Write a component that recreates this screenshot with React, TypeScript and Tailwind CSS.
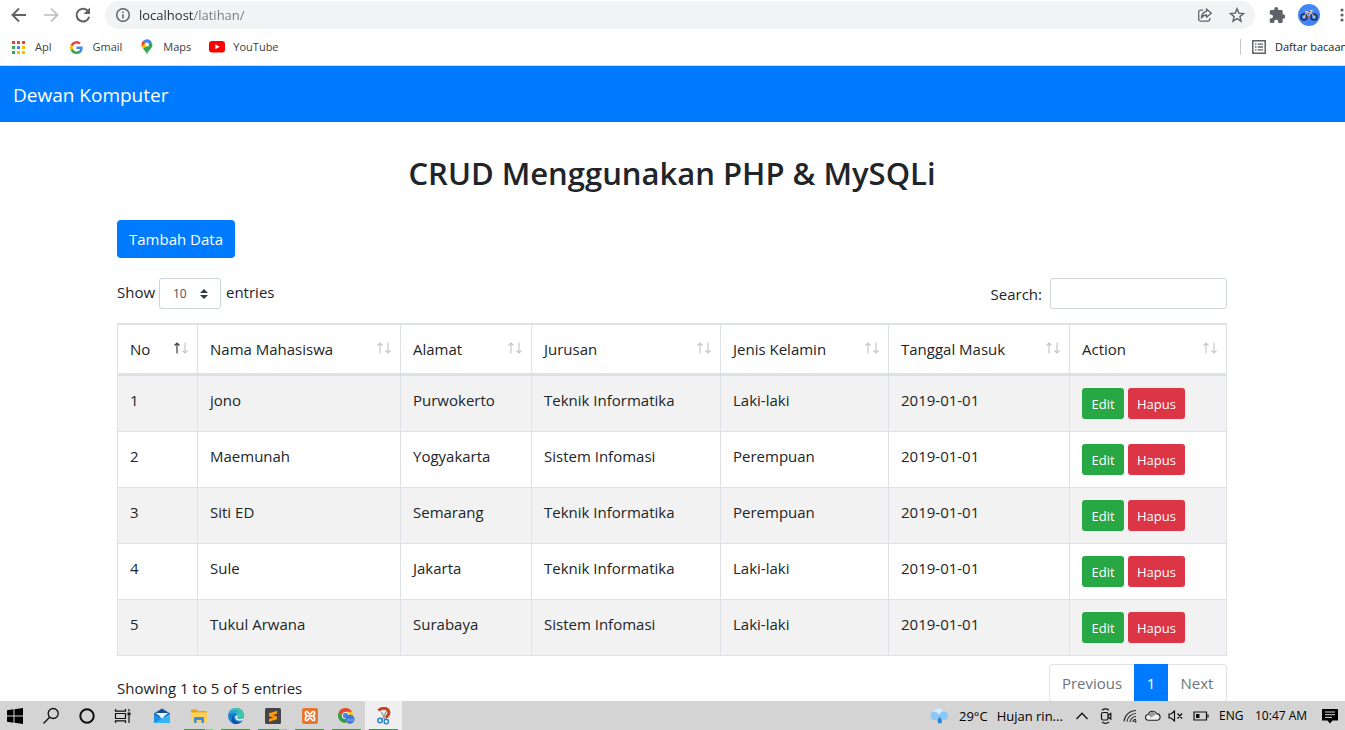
import type { ReactNode } from "react";

type Student = {
  no: number;
  nama: string;
  alamat: string;
  jurusan: string;
  kelamin: string;
  masuk: string;
};

const students: Student[] = [
  { no: 1, nama: "jono", alamat: "Purwokerto", jurusan: "Teknik Informatika", kelamin: "Laki-laki", masuk: "2019-01-01" },
  { no: 2, nama: "Maemunah", alamat: "Yogyakarta", jurusan: "Sistem Infomasi", kelamin: "Perempuan", masuk: "2019-01-01" },
  { no: 3, nama: "Siti ED", alamat: "Semarang", jurusan: "Teknik Informatika", kelamin: "Perempuan", masuk: "2019-01-01" },
  { no: 4, nama: "Sule", alamat: "Jakarta", jurusan: "Teknik Informatika", kelamin: "Laki-laki", masuk: "2019-01-01" },
  { no: 5, nama: "Tukul Arwana", alamat: "Surabaya", jurusan: "Sistem Infomasi", kelamin: "Laki-laki", masuk: "2019-01-01" },
];

const columns = [
  { label: "No", width: "w-[80px]" },
  { label: "Nama Mahasiswa", width: "w-[203px]" },
  { label: "Alamat", width: "w-[131px]" },
  { label: "Jurusan", width: "w-[189px]" },
  { label: "Jenis Kelamin", width: "w-[168px]" },
  { label: "Tanggal Masuk", width: "w-[181px]" },
  { label: "Action", width: "w-[157px]" },
];

function SortArrows({ active }: { active: boolean }) {
  return (
    <svg width="16" height="14" viewBox="0 0 16 14" fill="none" strokeWidth="1.2" aria-hidden="true">
      <path d="M4 11.5V1M1.500 3.500 4 1 6.500 3.500" stroke={active ? "#3a3f44" : "#c6c7c9"} />
      <path d="M12 .5V11M9.500 8.500 12 11 14.500 8.500" stroke="#c6c7c9" />
    </svg>
  );
}

function IconButton({ label, children, className = "" }: { label: string; children: ReactNode; className?: string }) {
  return (
    <button type="button" aria-label={label} className={`flex shrink-0 items-center justify-center ${className}`}>
      {children}
    </button>
  );
}

function BrowserToolbar() {
  return (
    <div className="flex h-[30px] items-center overflow-hidden pl-[10px]">
      <IconButton label="Back" className="w-[18px]">
        <svg width="18" height="18" viewBox="0 0 18 18" fill="none" stroke="#5f6368" strokeWidth="1.9">
          <path d="M16 9H3M9 2.500 2.500 9 9 15.500" />
        </svg>
      </IconButton>
      <IconButton label="Forward" className="ml-[14px] w-[18px]">
        <svg width="18" height="18" viewBox="0 0 18 18" fill="none" stroke="#babcbe" strokeWidth="1.700">
          <path d="M2 9H15M9 2.500 15.500 9 9 15.500" />
        </svg>
      </IconButton>
      <IconButton label="Reload" className="ml-[14px] w-[18px]">
        <svg width="18" height="18" viewBox="0 0 18 18">
          <path d="M14.200 5.300A6.400 6.400 0 1 0 15.200 10.800" fill="none" stroke="#5f6368" strokeWidth="2" />
          <path d="M16 1.500V8H9.500Z" fill="#5f6368" />
        </svg>
      </IconButton>
      <div className="ml-[13px] flex h-[28px] min-w-0 flex-1 items-center rounded-full bg-[#f1f3f4] pr-[10px] pl-[10px]">
        <IconButton label="Site information" className="w-4">
          <svg width="16" height="16" viewBox="0 0 16 16" fill="none" stroke="#5f6368" strokeWidth="1.500">
            <circle cx="8" cy="8" r="6.300" />
            <path d="M8 7.300V11.500M8 4.400V6" />
          </svg>
        </IconButton>
        <input
          type="text"
          aria-label="Address"
          defaultValue="localhost/latihan/"
          className="ml-2 min-w-0 flex-1 bg-[linear-gradient(90deg,#26272b_55px,#777a7e_55px)] bg-clip-text text-[13px] text-transparent outline-none"
        />
        <IconButton label="Share" className="w-4">
          <svg width="16" height="16" viewBox="0 0 16 16" fill="none" stroke="#5f6368" strokeWidth="1.300">
            <path d="M6 3.200H3.500A1.800 1.800 0 0 0 1.700 5V12.300A1.800 1.800 0 0 0 3.500 14.100H11A1.800 1.800 0 0 0 12.800 12.300V11" />
            <path d="M9.500 2 14.300 6.200 9.500 10.300V8C7.200 8 5.600 8.900 4.300 11 4.600 7.700 6.200 5 9.500 4.400Z" strokeLinejoin="round" />
          </svg>
        </IconButton>
        <IconButton label="Bookmark this page" className="ml-4 w-4">
          <svg width="16" height="16" viewBox="0 0 16 16" fill="none" stroke="#5f6368" strokeWidth="1.400">
            <path d="m8 1.700 1.800 4.400 4.700.4-3.600 3.100 1.100 4.600L8 11.700 4 14.200l1.100-4.600L1.500 6.500l4.700-.4Z" />
          </svg>
        </IconButton>
      </div>
      <IconButton label="Extensions" className="ml-[14px] w-4">
        <svg width="16" height="16" viewBox="1 1 21 21" fill="#5f6368">
          <path d="M20.500 11H19V7c0-1.100-.9-2-2-2h-4V3.500a2.500 2.500 0 0 0-5 0V5H4c-1.100 0-2 .9-2 2v3.800h1.500a2.700 2.700 0 0 1 0 5.400H2V20c0 1.100.9 2 2 2h3.800v-1.500a2.700 2.700 0 0 1 5.400 0V22H17c1.100 0 2-.9 2-2v-4h1.500a2.500 2.500 0 0 0 0-5Z" />
        </svg>
      </IconButton>
      <IconButton label="Profile" className="ml-[13px] w-[22px]">
        <svg width="22" height="22" viewBox="0 0 22 22" fill="none">
          <circle cx="11" cy="11" r="11" fill="#4285f4" />
          <circle cx="6" cy="13" r="3" stroke="#26304a" strokeWidth="1.500" />
          <circle cx="16" cy="13" r="3" stroke="#26304a" strokeWidth="1.500" />
          <circle cx="6" cy="13" r="1" fill="#c8d4e8" />
          <circle cx="16" cy="13" r="1" fill="#c8d4e8" />
          <path d="M6 13 8.500 8.500H13L10.500 13 8.500 8.500M13 8.500 16 13" stroke="#e9b7a0" strokeWidth="1" />
          <path d="M7 7.500H9.500M12 6.500H14.500L13 8.500" stroke="#c9dcff" strokeWidth="1" />
          <path d="M9.500 13H12" stroke="#d64b3c" strokeWidth="1.500" />
        </svg>
      </IconButton>
      <IconButton label="Browser menu" className="ml-[17px] w-[8px]">
        <svg width="8" height="16" viewBox="0 0 8 16" fill="#5f6368">
          <circle cx="5" cy="3" r="1.600" />
          <circle cx="5" cy="8" r="1.600" />
          <circle cx="5" cy="13" r="1.600" />
        </svg>
      </IconButton>
    </div>
  );
}

const appDots = ["#ea4335", "#ea4335", "#ea4335", "#34a853", "#4285f4", "#fbbc04", "#34a853", "#fbbc04", "#fbbc04"];

function BookmarksBar() {
  return (
    <nav aria-label="Bookmarks" className="flex h-[36px] items-center overflow-hidden border-b border-[#dadce0] pb-px pl-3 text-[11px] whitespace-nowrap text-[#3c4043]">
      <a href="#apps" className="flex items-center gap-[10px]">
        <svg width="13" height="13" viewBox="0 0 13 13">
          {appDots.map((fill, i) => (
            <rect key={i} x={(i % 3) * 5} y={Math.floor(i / 3) * 5} width="3" height="3" fill={fill} />
          ))}
        </svg>
        Apl
      </a>
      <a href="#gmail" className="ml-[19px] flex items-center gap-[9px]">
        <svg width="13" height="13" viewBox="0 0 24 24">
          <path fill="#4285f4" d="M23.500 12.300c0-.9-.1-1.500-.2-2.200H12v4.500h6.500a5.600 5.600 0 0 1-2.400 3.700v3h3.900c2.200-2.100 3.500-5.200 3.500-9Z" />
          <path fill="#34a853" d="M12 24c3.200 0 6-1.100 8-2.900l-3.900-3a7.200 7.200 0 0 1-10.800-3.800h-4v3.100A12 12 0 0 0 12 24Z" />
          <path fill="#fbbc05" d="M5.300 14.300a7.300 7.300 0 0 1 0-4.600V6.600h-4a12 12 0 0 0 0 10.800Z" />
          <path fill="#ea4335" d="M12 4.800c1.800 0 3.300.6 4.600 1.800l3.400-3.400A12 12 0 0 0 1.300 6.600l4 3.100A7.100 7.100 0 0 1 12 4.800Z" />
        </svg>
        Gmail
      </a>
      <a href="#maps" className="ml-[18px] flex items-center gap-[9px]">
        <svg width="14" height="16" viewBox="0 0 14 16">
          <path fill="#34a853" d="M7 16C7 12 12.500 10 12.500 5.800L11 2.500 3 9.800C4.800 12 6.500 13 7 16Z" />
          <path fill="#fbbc04" d="M2.500 9.200 9 6.500 5 4 1.700 7.500Z" />
          <path fill="#ea4335" d="M3.200 1.800A5.600 5.600 0 0 0 1.800 7.500L5.500 4Z" />
          <path fill="#4285f4" d="M3.200 1.800A5.500 5.500 0 0 1 11.500 2.600L8.500 6 5.500 4Z" />
          <circle cx="7" cy="5.600" r="2" fill="#fff" />
        </svg>
        Maps
      </a>
      <a href="#youtube" className="ml-[18px] flex items-center gap-2">
        <svg width="16" height="12" viewBox="0 0 16 12">
          <rect width="16" height="11.500" rx="3" fill="#f00" />
          <path d="M6.300 3.300V8.200L10.700 5.700Z" fill="#fff" />
        </svg>
        YouTube
      </a>
      <div className="ml-auto flex items-center">
        <span className="h-4 w-px bg-[#c4c7cb]" />
        <button type="button" className="ml-[11px] flex w-[93px] items-center gap-[9px] text-[#202124]">
          <svg width="14" height="14" viewBox="0 0 14 14" className="shrink-0" fill="none" stroke="#5f6368" strokeWidth="1.500">
            <path d="M.8.800H13.200V13.200H.800Z" />
            <path d="M3 4.200H4.500M5.700 4.200H11M3 7H4.500M5.700 7H11M3 9.800H4.500M5.700 9.800H11" strokeWidth="1.300" />
          </svg>
          Daftar bacaan
        </button>
      </div>
    </nav>
  );
}

function StudentTable() {
  return (
    <table className="mt-[14px] w-full table-fixed border-separate border-spacing-0 border-t-2 border-l border-[#dee2e6] text-left">
      <thead>
        <tr>
          {columns.map((column, i) => (
            <th key={column.label} scope="col" className={`${column.width} h-[51px] border-r border-b-[3px] border-[#dee2e6] p-0 font-normal`}>
              <button type="button" className="flex w-full items-center justify-between pr-2 pl-3">
                {column.label}
                <SortArrows active={i === 0} />
              </button>
            </th>
          ))}
        </tr>
      </thead>
      <tbody>
        {students.map((s) => (
          <tr key={s.no} className="h-14 align-top odd:bg-[#f2f2f2] [&>td]:border-r [&>td]:border-b [&>td]:border-[#dee2e6] [&>td]:px-3 [&>td]:py-3">
            <td>{s.no}</td>
            <td>{s.nama}</td>
            <td>{s.alamat}</td>
            <td>{s.jurusan}</td>
            <td>{s.kelamin}</td>
            <td>{s.masuk}</td>
            <td>
              <div className="flex gap-1 text-[13px] text-white">
                <a href={`#edit-${s.no}`} className="flex h-[31px] w-[42px] items-center justify-center rounded-[3px] bg-[#28a745]">
                  Edit
                </a>
                <a href={`#hapus-${s.no}`} className="flex h-[31px] w-[57px] items-center justify-center rounded-[3px] bg-[#dc3545]">
                  Hapus
                </a>
              </div>
            </td>
          </tr>
        ))}
      </tbody>
    </table>
  );
}

function TaskbarApp({ label, underline = "", active = false, children }: { label: string; underline?: string; active?: boolean; children: ReactNode }) {
  return (
    <button
      type="button"
      aria-label={label}
      className={`relative flex h-full w-[37px] shrink-0 items-center justify-center ${active ? "bg-[#efefef]" : ""}`}
    >
      {children}
      {underline && <span className={`absolute bottom-0 h-px ${underline}`} />}
    </button>
  );
}

const fullLine = "inset-x-1 bg-[#2aa81c]";
const stackedLine = "inset-x-1 bg-[linear-gradient(90deg,#2aa81c_72%,#8ccf7c_72%)]";

function Taskbar() {
  return (
    <footer className="flex h-[29px] shrink-0 items-center justify-between overflow-hidden bg-[#d4d4d4] text-black">
      <div className="flex h-full items-center">
        <IconButton label="Start" className="w-[30px]">
          <svg width="16" height="16" viewBox="0 0 16 16">
            <path d="M0 2.300 6.500 1.300V7.500H0ZM7.500 1.200 16 0V7.500H7.500ZM0 8.500H6.500V14.700L0 13.700ZM7.500 8.500H16V16L7.500 14.800Z" />
          </svg>
        </IconButton>
        <IconButton label="Search" className="ml-[3px] w-[36px]">
          <svg width="18" height="18" viewBox="0 0 18 18" fill="none" stroke="#111" strokeWidth="1.300">
            <circle cx="11.200" cy="6.500" r="5" />
            <path d="M7.600 10.200 1.500 16.500" />
          </svg>
        </IconButton>
        <IconButton label="Cortana" className="w-[36px]">
          <svg width="16" height="16" viewBox="0 0 16 16" fill="none" stroke="#111" strokeWidth="2">
            <circle cx="8" cy="8" r="6.700" />
          </svg>
        </IconButton>
        <IconButton label="Task view" className="w-[36px]">
          <svg width="18" height="16" viewBox="0 0 18 16" fill="none" stroke="#111" strokeWidth="1.200">
            <path d="M1.500 1V3.200H11.500V1M1.500 15V12.800H11.500V15M1.500 5.500H11.500V10.500H1.500ZM15 1V3.500M15 8V15" />
            <path d="M13.500 4.500H16.500V7.500H13.500Z" fill="#111" stroke="none" />
          </svg>
        </IconButton>
        <div className="flex h-full pl-[2px]">
          <TaskbarApp label="Mail">
            <svg width="16" height="16" viewBox="0 0 16 16">
              <path d="M0 5.500 8 .5 16 5.500V9H0Z" fill="#0f4f9e" />
              <path d="M1.500 5H14.500L8 10Z" fill="#e8f4fd" />
              <path d="M0 5.500 8 10.500V15H0Z" fill="#1f8fe0" />
              <path d="M16 5.500 8 10.500 0 15H16Z" fill="#35b5f2" />
            </svg>
          </TaskbarApp>
          <TaskbarApp label="File Explorer" underline={stackedLine}>
            <svg width="16" height="16" viewBox="0 0 16 16">
              <path d="M0 2.500A1 1 0 0 1 1 1.500H6L7.500 3H15A1 1 0 0 1 16 4V8H0Z" fill="#e8a21a" />
              <path d="M0 4.500H16V13.500A1 1 0 0 1 15 14.500H1A1 1 0 0 1 0 13.500Z" fill="#fdd25c" />
              <path d="M3 15V10A1 1 0 0 1 4 9H12A1 1 0 0 1 13 10V15H10.500V12H5.500V15Z" fill="#3a8ee0" />
            </svg>
          </TaskbarApp>
          <TaskbarApp label="Microsoft Edge" underline={fullLine}>
            <svg width="16" height="16" viewBox="0 0 16 16">
              <circle cx="8" cy="8" r="8" fill="#1b7fd0" />
              <path d="M.3 6.500C1.500 2 5 0 8.500 0 13 0 16 3.200 16 6.800 16 9.300 14 10.800 11.500 10.800 10 10.800 9 10.300 9.300 9.500 10.500 8 9.500 5 6.500 4.700 3.500 4.500 1 5.300.300 6.500Z" fill="#3ec7a0" />
              <path d="M.3 6.500C1.500 3 4.500 1.500 7.500 2 10 2.400 11 4 11 5.500 10 4.800 8.500 4.300 6.500 4.700 3.500 4.500 1 5.300.300 6.500Z" fill="#23a5dd" />
              <path d="M6.500 6.500C4.500 8 5 12.500 9 14 11.500 14.700 13.500 13.500 14.500 12.500 12.500 15.500 9 16.500 6 15.700 3 14.500 3.200 8 6.500 6.500Z" fill="#124f9c" />
              <path d="M9.300 9.500C8.800 10.500 10.500 11.200 12.500 11 14 10.800 15.300 10 15.700 9 15.500 10.800 14.800 12 14.500 12.300 11 13.800 7 12 7.200 9.200 7.300 7.700 8.300 7 9.500 7.300 9.900 8.300 9.600 9 9.300 9.500Z" fill="#e4eef5" />
            </svg>
          </TaskbarApp>
          <TaskbarApp label="Sublime Text" underline={stackedLine}>
            <svg width="16" height="16" viewBox="0 0 16 16">
              <rect width="16" height="16" rx="1.500" fill="#464646" />
              <path d="M12 2.800V5.800L7.700 7.100 12 8.500V11.300L4 13.800V11L8.300 9.600 4 8.200V5.300Z" fill="#ff9a0c" />
            </svg>
          </TaskbarApp>
          <TaskbarApp label="XAMPP" underline={fullLine}>
            <svg width="16" height="16" viewBox="0 0 16 16" fill="none">
              <rect width="16" height="16" rx="2" fill="#e8762c" />
              <path d="M3.500 5.500V4.500A1 1 0 0 1 4.500 3.500C7 3.500 6 6 8 6S9 3.500 11.500 3.500A1 1 0 0 1 12.500 4.500V6C12.500 7.500 11 7 11 8S12.500 8.500 12.500 10V11.500A1 1 0 0 1 11.500 12.500C9 12.500 10 10 8 10S7 12.500 4.500 12.500A1 1 0 0 1 3.500 11.500V10C3.500 8.500 5 9 5 8S3.500 7.500 3.500 6Z" stroke="#fff" strokeWidth="1.700" />
              <path d="M5.500 8H10.500" stroke="#fff" strokeWidth="1.500" />
            </svg>
          </TaskbarApp>
          <TaskbarApp label="Google Chrome" underline={fullLine}>
            <svg width="17" height="16" viewBox="0 0 17 16">
              <circle cx="7.500" cy="7.500" r="7.500" fill="#fbc116" />
              <path d="M1 3.800A7.500 7.500 0 0 1 14 3.800H7.500L4.300 9.300Z" fill="#de4a3b" />
              <path d="M1 3.800A7.500 7.500 0 0 0 7.500 15L10.800 9.300H4.300Z" fill="#2f9e58" />
              <circle cx="7.500" cy="7.500" r="3.500" fill="#fff" />
              <circle cx="7.500" cy="7.500" r="2.700" fill="#4285f4" />
              <circle cx="12" cy="11.300" r="4.500" fill="#3b78dc" />
              <circle cx="10.500" cy="12" r="1.300" fill="#7fa7ea" />
              <circle cx="14" cy="12" r="1.300" fill="#7fa7ea" />
            </svg>
          </TaskbarApp>
          <TaskbarApp label="Snipping Tool" active underline={fullLine}>
            <svg width="16" height="18" viewBox="0 0 16 18" fill="none">
              <path d="M2.500 3.500C5 .8 10 .500 12 3 13.800 5.300 12.800 9 9.500 10.500" stroke="#c9401f" strokeWidth="3" />
              <path d="M5.500 5 9.500 13M10.500 4 6 13" stroke="#9a9fa5" strokeWidth="1.400" />
              <circle cx="4" cy="13.500" r="2.200" stroke="#1f86cf" strokeWidth="1.400" />
              <circle cx="10.300" cy="14.500" r="2.200" stroke="#1f86cf" strokeWidth="1.400" />
            </svg>
          </TaskbarApp>
        </div>
      </div>
      <div className="flex h-full items-center text-[12px] whitespace-nowrap">
        <button type="button" className="flex w-[145px] items-center text-[13px]">
          <svg width="20" height="16" viewBox="0 0 20 16" className="mr-[10px] shrink-0">
            <path d="M4.500 12A4.300 4.300 0 0 1 4.500 3.800 5.400 5.400 0 0 1 14.500 3.300 4.400 4.400 0 0 1 15.500 12Z" fill="#8cc8f5" />
            <path d="M4.500 3.800A5.400 5.400 0 0 1 14.500 3.300 5 5 0 0 0 10 7.500 4.500 4.500 0 0 0 4.500 3.800Z" fill="#d8eeff" />
            <path d="M10.500 8.500C12 11 13 12 13 13.300A2.200 2.200 0 0 1 8.500 13.300C8.500 12 9.500 11 10.500 8.500Z" fill="#2b86d9" />
          </svg>
          <span className="mr-[9px]">29°C</span>
          <span>Hujan rin...</span>
        </button>
        <IconButton label="Show hidden icons" className="w-4">
          <svg width="12" height="8" viewBox="0 0 12 8" fill="none" stroke="#111" strokeWidth="1.300">
            <path d="M.5 7 6 1.300 11.500 7" />
          </svg>
        </IconButton>
        <IconButton label="Meet now" className="ml-2 w-4">
          <svg width="14" height="16" viewBox="0 0 14 16" fill="none" stroke="#111" strokeWidth="1.200">
            <rect x="2.500" y="4.500" width="6.500" height="7.500" rx="1.500" />
            <path d="M9 7.500 11.800 5.500V11L9 9M3 2.300C5 .800 8 .800 10 2.300M3 14C5 15.500 8 15.500 10 14" />
          </svg>
        </IconButton>
        <IconButton label="Network" className="ml-2 w-4">
          <svg width="15" height="14" viewBox="0 0 15 14" fill="none" stroke="#333" strokeWidth="1.200">
            <path d="M1 12.500A12 12 0 0 1 13 1.500M4 12.800A9 9 0 0 1 13 4.500M7 13A6 6 0 0 1 13 7.500M9.800 13A3.300 3.300 0 0 1 13 10.300" />
            <circle cx="12.500" cy="12.500" r="1" fill="#111" stroke="none" />
          </svg>
        </IconButton>
        <IconButton label="OneDrive" className="ml-[7px] w-4">
          <svg width="16" height="11" viewBox="0 0 16 11">
            <path d="M3.500 10.300A2.900 2.900 0 0 1 3.300 4.500 4.600 4.600 0 0 1 11.700 3.600 3.400 3.400 0 0 1 12.500 10.300Z" fill="#eee" stroke="#222" strokeWidth="1.100" />
            <path d="M3.500 5A4.300 4.300 0 0 1 11.300 4L6 7.500Z" fill="#999" />
          </svg>
        </IconButton>
        <IconButton label="Volume" className="ml-[7px] w-4">
          <svg width="16" height="12" viewBox="0 0 16 12" fill="none" stroke="#111" strokeWidth="1.200">
            <path d="M1 4H3L6.500 1V11L3 8H1ZM9.500 3.500 14 8.500M14 3.500 9.500 8.500" />
          </svg>
        </IconButton>
        <IconButton label="Battery" className="ml-[9px] w-4">
          <svg width="16" height="10" viewBox="0 0 16 10" fill="none" stroke="#111" strokeWidth="1.200">
            <path d="M1 1H13.500V9H1ZM15 3.500V6.500" />
            <path d="M3 3H6.500V7H3Z" fill="#111" stroke="none" />
          </svg>
        </IconButton>
        <button type="button" className="ml-[10px] w-[36px] text-left">ENG</button>
        <button type="button" className="w-[67px] text-left">10:47 AM</button>
        <IconButton label="Notifications" className="mr-[7px] w-4">
          <svg width="16" height="16" viewBox="0 0 16 16">
            <path d="M0 1H16V12.500H10.500L8 15.500 5.500 12.500H0Z" />
            <path d="M3 4H13M3 6.700H13M3 9.400H10" stroke="#d4d4d4" />
          </svg>
        </IconButton>
      </div>
    </footer>
  );
}

export default function App() {
  return (
    <div className="flex h-screen flex-col overflow-hidden bg-white font-['Open_Sans',sans-serif] text-[15px] leading-6 text-[#212529]">
      <header className="shrink-0">
        <BrowserToolbar />
        <BookmarksBar />
      </header>
      <div className="min-h-0 flex-1 overflow-hidden">
        <nav aria-label="Main" className="flex h-14 items-center bg-[#007bff] px-[13px] pt-0.5">
          <a href="#home" className="text-[19px] text-white">
            Dewan Komputer
          </a>
        </nav>
        <main className="pr-px">
          <div className="mx-auto max-w-[1140px] px-[15px]">
            <h1 className="pt-8 text-center text-[31px] leading-[38px] font-semibold">CRUD Menggunakan PHP &amp; MySQLi</h1>
            <a href="#tambah" className="mt-7 flex h-[38px] w-[118px] items-center justify-center rounded-[4px] bg-[#007bff] text-white">
              Tambah Data
            </a>
            <div className="mt-5 flex items-center justify-between">
              <div className="flex items-center">
                <label htmlFor="length" className="w-[42px] pb-[3px]">Show</label>
                <div className="relative">
                  <select id="length" defaultValue="10" className="block h-[31px] w-[62px] appearance-none rounded-[3px] border border-[#ced4da] bg-white pt-px pl-[13px] text-[12px] text-[#495057]">
                    <option>10</option>
                    <option>25</option>
                    <option>50</option>
                    <option>100</option>
                  </select>
                  <svg width="8" height="10" viewBox="0 0 8 10" className="pointer-events-none absolute top-[11px] right-[13px]" fill="#343a40">
                    <path d="M4 0 8 4H0ZM4 10 0 6H8Z" />
                  </svg>
                </div>
                <span className="ml-[5px] pb-[3px]">entries</span>
              </div>
              <div className="flex items-center gap-2">
                <label htmlFor="search">Search:</label>
                <input id="search" type="search" className="h-[31px] w-[177px] rounded-[3px] border border-[#ced4da] bg-white px-2 text-[13px]" />
              </div>
            </div>
            <StudentTable />
            <div className="mt-2 flex items-start justify-between">
              <p className="pt-3">Showing 1 to 5 of 5 entries</p>
              <nav aria-label="Pagination" className="flex h-[38px] text-[#6c757d]">
                <button type="button" disabled className="w-[85px] rounded-l-[4px] border border-r-0 border-[#dee2e6]">Previous</button>
                <button type="button" aria-current="page" className="w-[34px] bg-[#007bff] text-white">1</button>
                <button type="button" disabled className="w-[59px] rounded-r-[4px] border border-l-0 border-[#dee2e6]">Next</button>
              </nav>
            </div>
          </div>
        </main>
      </div>
      <Taskbar />
    </div>
  );
}
